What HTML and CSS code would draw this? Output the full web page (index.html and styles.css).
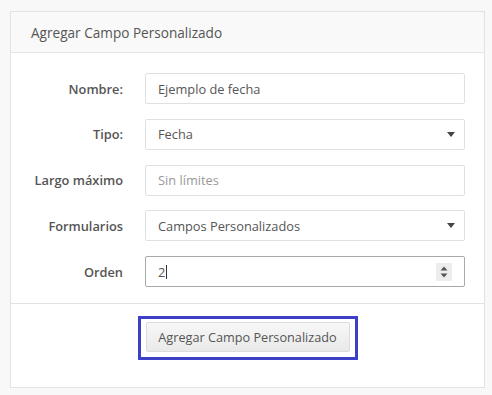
FILE: index.html
```html
<!DOCTYPE html>
<html lang="es">
<head>
<meta charset="utf-8">
<link rel="stylesheet" href="styles.css">
</head>
<body>
<div class="card">
  <div class="card-header">Agregar Campo Personalizado</div>
  <div class="card-body">
    <div class="form">
      <label class="label">Nombre:</label>
      <div class="field"><span class="value">Ejemplo de fecha</span></div>

      <label class="label">Tipo:</label>
      <div class="field select"><span class="value">Fecha</span>
        <svg class="caret" width="8" height="5" viewBox="0 0 8 5"><path d="M0 0h8L4 5z" fill="#444"/></svg>
      </div>

      <label class="label">Largo máximo</label>
      <div class="field"><span class="placeholder">Sin límites</span></div>

      <label class="label">Formularios</label>
      <div class="field select"><span class="value">Campos Personalizados</span>
        <svg class="caret" width="8" height="5" viewBox="0 0 8 5"><path d="M0 0h8L4 5z" fill="#444"/></svg>
      </div>

      <label class="label">Orden</label>
      <div class="field focus"><span class="value">2</span><span class="cursor"></span>
        <span class="spin">
          <svg width="8" height="14" viewBox="0 0 8 14"><path d="M0.5 5.5h7L4 1.5z" fill="#555"/><path d="M0.5 8.5h7L4 12.5z" fill="#555"/></svg>
        </span>
      </div>
    </div>
  </div>
  <div class="card-footer">
    <div class="highlight">
      <button class="btn" type="button">Agregar Campo Personalizado</button>
    </div>
  </div>
</div>
</body>
</html>
```
FILE: styles.css
```css
* { box-sizing: border-box; }
html, body {
  margin: 0;
  padding: 0;
  background: #f8f8f8;
  font-family: "Open Sans", "Noto Sans", sans-serif;
  color: #555;
}
body {
  padding: 11px 7px 0 10px;
}
.card {
  width: 475px;
  height: 377px;
  background: #fff;
  border: 1px solid #e2e2e2;
  display: flex;
  flex-direction: column;
}
.card-header {
  height: 41px;
  background: #f9f9f9;
  border-bottom: 1px solid #e5e5e5;
  padding: 0 20px;
  display: flex;
  align-items: center;
  font-size: 13.6px;
  color: #555;
}
.card-body {
  padding: 20px 19px 16px 0;
  border-bottom: 1px solid #e2e2e2;
}
.form {
  display: grid;
  grid-template-columns: 112px 1fr;
  column-gap: 22px;
  row-gap: 14.75px;
  align-items: center;
}
.label {
  text-align: right;
  font-weight: 600;
  font-size: 12.8px;
  color: #555;
}
.field {
  height: 31px;
  border: 1px solid #e0e0e0;
  border-radius: 2px;
  padding: 0 12px;
  display: flex;
  align-items: center;
  font-size: 12.8px;
  color: #555;
  background: #fff;
}
.field.select { padding-right: 9px; }
.field .value { color: #555; }
.field .placeholder { color: #999; }
.caret { margin-left: auto; }
.field.focus { border-color: #a9a9a9; }
.cursor {
  width: 1px;
  height: 14px;
  background: #333;
  margin-left: 1px;
}
.spin {
  margin-left: auto;
  width: 16px;
  height: 18px;
  background: #ededed;
  display: flex;
  align-items: center;
  justify-content: center;
}
.card-footer {
  display: flex;
  justify-content: center;
  padding-top: 12px;
}
.highlight {
  border: 3px solid #3c40c6;
  padding: 3px 5px 5px;
}
.btn {
  display: block;
  width: 204px;
  height: 30px;
  padding: 0;
  font-family: "Open Sans", "Noto Sans", sans-serif;
  font-size: 12.7px;
  color: #555;
  border: 1px solid #dcdcdc;
  border-radius: 2px;
  background: linear-gradient(#f7f7f7, #e9e9e9);
}
```
